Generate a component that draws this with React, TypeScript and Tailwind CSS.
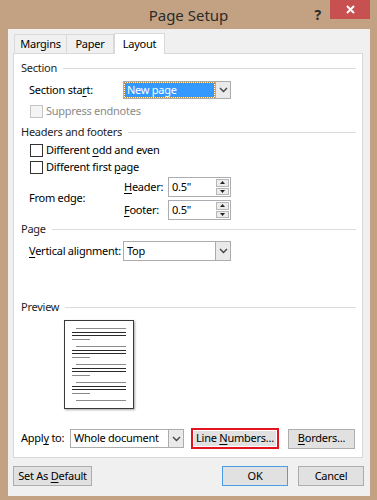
import React from 'react';

const font = "font-['Noto_Sans',sans-serif]";

function Key({ children }: { children: React.ReactNode }) {
  return <span className="underline underline-offset-2">{children}</span>;
}

function GroupHeader({ label, mt }: { label: string; mt: string }) {
  return (
    <div className={`flex items-center h-4 ${mt}`}>
      <span className="text-[#1e1e1e] whitespace-nowrap">{label}</span>
      <div className="flex-1 h-px bg-[#dcdcdc] ml-[6px]" />
    </div>
  );
}

function Chevron() {
  return (
    <svg width="9" height="6" viewBox="0 0 9 6">
      <path d="M1 1 L4.5 4.5 L8 1" fill="none" stroke="#444" strokeWidth="1.4" />
    </svg>
  );
}

function Select({ value, w, h, selected }: { value: string; w: string; h: string; selected?: boolean }) {
  return (
    <div className={`flex ${w} ${h} border border-[#acacac] bg-white`}>
      <div className="flex-1 flex items-center p-[1px]">
        <div
          className={`h-full w-full flex items-center pl-[2px] whitespace-nowrap ${
            selected ? 'bg-[#3399ff] text-white outline outline-1 outline-dotted outline-[#c68a3a]' : 'text-black'
          }`}
        >
          {value}
        </div>
      </div>
      <div className="w-[15px] border-l border-[#acacac] bg-[#eaeaea] flex items-center justify-center">
        <Chevron />
      </div>
    </div>
  );
}

function Spinner({ value }: { value: string }) {
  return (
    <div className="flex w-[63px] h-5 border border-[#abadb3] bg-white">
      <div className="flex-1 flex items-center pl-[3px] text-black">{value}</div>
      <div className="w-[15px] flex flex-col gap-px p-px">
        <div className="flex-1 bg-[#ececec] border border-[#b7b7b7] flex items-center justify-center">
          <svg width="5" height="3" viewBox="0 0 5 3"><path d="M0 3 L2.5 0 L5 3Z" fill="#222" /></svg>
        </div>
        <div className="flex-1 bg-[#ececec] border border-[#b7b7b7] flex items-center justify-center">
          <svg width="5" height="3" viewBox="0 0 5 3"><path d="M0 0 L2.5 3 L5 0Z" fill="#222" /></svg>
        </div>
      </div>
    </div>
  );
}

function Checkbox({ children, disabled, mt }: { children: React.ReactNode; disabled?: boolean; mt: string }) {
  return (
    <div className={`flex items-center h-[14px] pl-[9px] ${mt}`}>
      <div
        className={`w-[13px] h-[13px] border ${
          disabled ? 'border-[#c4c4c4] bg-[#f4f4f4]' : 'border-[#333] bg-white'
        }`}
      />
      <span className={`ml-[3px] whitespace-nowrap ${disabled ? 'text-[#8a8a8a]' : 'text-black'}`}>{children}</span>
    </div>
  );
}

function Button({ children, className }: { children: React.ReactNode; className?: string }) {
  return (
    <div
      className={`h-5 flex items-center justify-center bg-[#e1e1e1] border border-[#adadad] text-black ${className ?? ''}`}
    >
      <span className="whitespace-nowrap">{children}</span>
    </div>
  );
}

function PreviewPage() {
  const groups = [0, 1, 2, 3];
  return (
    <div className="ml-[43px] mt-[5px] w-[70px] h-[89px] bg-white border border-[#3a3a3a] shadow-[1px_1px_2px_rgba(0,0,0,0.35)] flex flex-col pt-[7px] pl-[7px]">
      {groups.map((g) => (
        <div key={g} className="flex flex-col mb-[6px]">
          <div className="ml-[4px] w-[50px] h-px bg-[#8a8a8a]" />
          <div className="mt-[2.5px] w-[54px] h-px bg-[#2a2a2a]" />
          <div className="mt-[2.5px] w-[54px] h-px bg-[#2a2a2a]" />
          <div className="mt-[3px] w-[18px] h-px bg-[#8a8a8a]" />
        </div>
      ))}
      <div className="ml-[4px] w-[50px] h-px bg-[#8a8a8a]" />
    </div>
  );
}

export default function App() {
  return (
    <div className={`${font} text-[11px] tracking-[-0.25px] w-[377px] h-[500px] bg-[#c3a283] flex flex-col`}>
      {/* Title bar */}
      <div className="h-[29px] flex relative">
        <div className="flex-1 flex items-center justify-center text-[15px] tracking-normal text-[#2b2b2b] pt-[1px]">
          Page Setup
        </div>
        <div className="absolute right-[56px] top-[4px] text-[14px] font-bold text-[#2b2b2b]">?</div>
        <div className="absolute right-[7px] top-0 w-[40px] h-[19px] bg-[#c75050] flex items-center justify-center">
          <svg width="9" height="9" viewBox="0 0 9 9">
            <path d="M1 1 L8 8 M8 1 L1 8" stroke="#fff" strokeWidth="2" />
          </svg>
        </div>
      </div>

      {/* Client area */}
      <div className="ml-[8px] mr-[7px] h-[467px] bg-[#f0f0f0] flex flex-col pl-[5px] pr-[7px]">
        {/* Tabs */}
        <div className="flex items-end h-[25px] pl-[1px] mt-[-1px]">
          <div className="h-[19px] w-[53px] border border-[#d9d9d9] border-b-0 bg-[#f0f0f0] flex items-center justify-center text-black">
            Margins
          </div>
          <div className="h-[19px] w-[47px] border border-[#d9d9d9] border-b-0 border-l-0 bg-[#f0f0f0] flex items-center justify-center text-black">
            Paper
          </div>
          <div className="h-[21px] w-[51px] border border-[#d9d9d9] border-b-0 bg-white flex items-center justify-center text-black mb-[-1px] relative z-10">
            Layout
          </div>
        </div>

        {/* Panel */}
        <div className="bg-white border border-[#d9d9d9] flex flex-col pl-[7px] pr-[6px] pb-[8px]">
          <GroupHeader label="Section" mt="mt-[6px]" />
          <div className="flex items-center h-[18px] mt-[5px] pl-[8px]">
            <span className="w-[94px] text-black whitespace-nowrap">
              Section sta<Key>r</Key>t:
            </span>
            <Select value="New page" w="w-[108px]" h="h-[18px]" selected />
          </div>
          <Checkbox disabled mt="mt-[5px]">Suppress endnotes</Checkbox>

          <GroupHeader label="Headers and footers" mt="mt-[6px]" />
          <Checkbox mt="mt-[3px]">
            Different <Key>o</Key>dd and even
          </Checkbox>
          <Checkbox mt="mt-[3px]">
            Different first <Key>p</Key>age
          </Checkbox>
          <div className="flex items-center mt-[3px] pl-[8px]">
            <span className="w-[95px] text-black whitespace-nowrap">From edge:</span>
            <div className="flex flex-col gap-[3px]">
              <div className="flex items-center">
                <span className="w-[44px] text-black">
                  <Key>H</Key>eader:
                </span>
                <Spinner value={'0.5"'} />
              </div>
              <div className="flex items-center">
                <span className="w-[44px] text-black">
                  <Key>F</Key>ooter:
                </span>
                <Spinner value={'0.5"'} />
              </div>
            </div>
          </div>

          <GroupHeader label="Page" mt="mt-[1px]" />
          <div className="flex items-center h-5 mt-[4px] pl-[8px]">
            <span className="w-[94px] text-black whitespace-nowrap">
              <Key>V</Key>ertical alignment:
            </span>
            <Select value="Top" w="w-[108px]" h="h-5" />
          </div>

          <GroupHeader label="Preview" mt="mt-[38px]" />
          <PreviewPage />

          <div className="flex items-center h-[21px] mt-[19px]">
            <span className="w-[49px] text-black whitespace-nowrap">
              Appl<Key>y</Key> to:
            </span>
            <Select value="Whole document" w="w-[114px]" h="h-[19px]" />
            <div className="ml-[7px] w-[88px] h-[21px] border-2 border-[#e3141f] p-px flex">
              <div className="flex-1 flex items-center justify-center bg-[#e1e1e1] text-black">
                <span className="whitespace-nowrap">
                  Line <Key>N</Key>umbers...
                </span>
              </div>
            </div>
            <Button className="ml-[9px] w-[67px]">
              <Key>B</Key>orders...
            </Button>
          </div>
        </div>

        {/* Bottom buttons */}
        <div className="flex items-center mt-[8px]">
          <Button className="w-[79px]">
            Set As <Key>D</Key>efault
          </Button>
          <div className="flex-1" />
          <Button className="w-[66px] !border-[#4a9ee8] mr-[10px]">OK</Button>
          <Button className="w-[66px] mr-[-1px]">Cancel</Button>
        </div>
      </div>
    </div>
  );
}
